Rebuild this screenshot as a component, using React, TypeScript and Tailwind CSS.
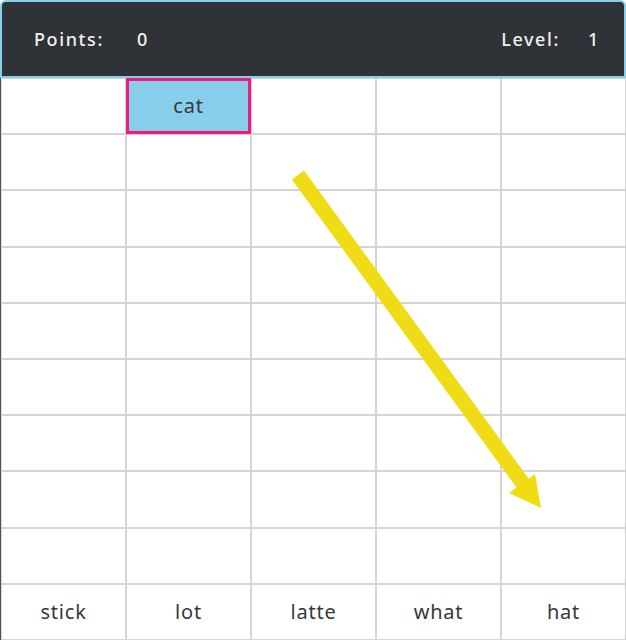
import React from "react";

const words = ["stick", "lot", "latte", "what", "hat"];

const App = () => {
  // 9 empty rows, then the word row at the bottom
  const rows: (string | null)[][] = [];
  for (let r = 0; r < 9; r++) {
    rows.push([null, r === 0 ? "cat" : null, null, null, null]);
  }
  rows.push(words);

  return (
    <div
      className="relative w-[626px] h-[640px] bg-white overflow-hidden"
      style={{ fontFamily: '"Noto Sans", "Open Sans", sans-serif' }}
    >
      {/* Score bar */}
      <div className="h-[78px] flex items-center justify-between bg-[#2f3236] border-2 border-[#87ceeb] rounded-t-md pl-8 pr-6 text-[#f2f2f2] text-[18px] font-medium tracking-[0.09em]">
        <div className="flex items-center gap-[33px]">
          <span>Points:</span>
          <span>0</span>
        </div>
        <div className="flex items-center gap-7">
          <span>Level:</span>
          <span>1</span>
        </div>
      </div>

      {/* Board */}
      <div className="grid grid-cols-5 grid-rows-10 h-[562px] border-l border-[#555]">
        {rows.map((row, r) =>
          row.map((word, c) => {
            const active = r === 0 && c === 1;
            return (
              <div
                key={`${r}-${c}`}
                className={
                  active
                    ? "flex items-center justify-center bg-[#87ceeb] border-[3px] border-[#f2197d] text-[20px] tracking-[0.04em] text-[#383838]"
                    : "flex items-center justify-center border border-[#d4d4d4] text-[20px] tracking-[0.04em] text-[#383838]"
                }
              >
                {word}
              </div>
            );
          })
        )}
      </div>

      {/* Hint arrow */}
      <svg
        className="absolute left-0 top-0 pointer-events-none"
        width="626"
        height="640"
        viewBox="0 0 626 640"
      >
        <line
          x1="298"
          y1="175"
          x2="524"
          y2="485"
          stroke="#f0dc14"
          strokeWidth="15"
        />
        <polygon points="541,508 509,493 535,474" fill="#f0dc14" />
      </svg>
    </div>
  );
};

export default App;
